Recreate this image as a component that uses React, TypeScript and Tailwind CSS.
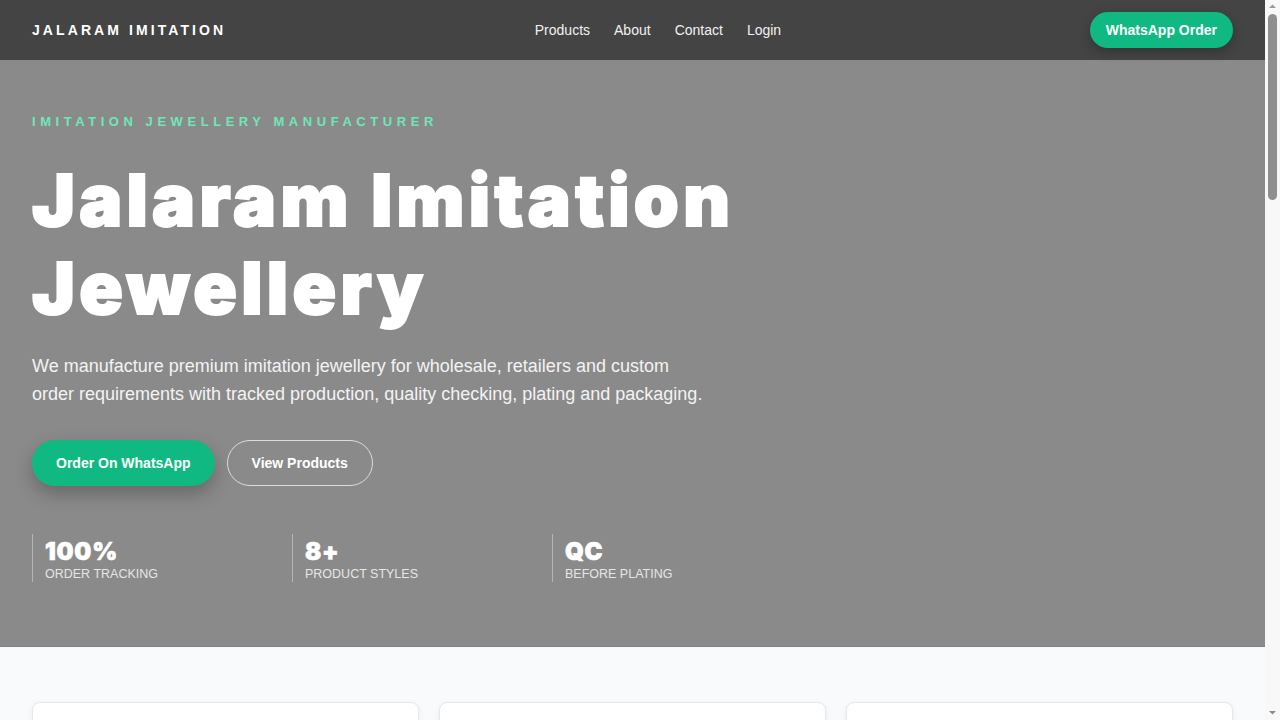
import React from "react";

const heavy = "font-['Inter','Liberation_Sans',sans-serif]";

const stats = [
  { value: "100%", label: "Order Tracking" },
  { value: "8+", label: "Product Styles" },
  { value: "QC", label: "Before Plating" },
];

const features = [
  {
    title: "Wholesale Supply",
    text: "Bulk orders of necklaces, earrings, bangles and sets for distributors and shops across India.",
  },
  {
    title: "Custom Orders",
    text: "Share your design or reference and we prepare samples, moulds and finished pieces to your brief.",
  },
  {
    title: "Tracked Production",
    text: "Every order moves through casting, polishing, plating, quality checking and packaging stages.",
  },
];

const products = [
  "Necklace Sets",
  "Earrings",
  "Bangles",
  "Mangalsutra",
  "Rings",
  "Maang Tikka",
  "Anklets",
  "Bridal Sets",
];

// Classic page scrollbar drawn beside the scrolling content
function Scrollbar() {
  return (
    <div className="flex w-[15px] shrink-0 flex-col items-center bg-[#f8f8f8]">
      <svg width="15" height="14" viewBox="0 0 15 14" className="shrink-0">
        <path d="M4 8 L7.5 4.5 L11 8 Z" fill="#9a9a9a" />
      </svg>
      <div className="h-[186px] w-[9px] shrink-0 rounded-full bg-[#8f8f8f]" />
      <div className="flex-1" />
      <svg width="15" height="14" viewBox="0 0 15 14" className="shrink-0">
        <path d="M4 5 L7.5 8.5 L11 5 Z" fill="#8a8a8a" />
      </svg>
    </div>
  );
}

export default function App() {
  return (
    <div className="flex h-screen bg-[#f8fafc] font-['Liberation_Sans',Arial,sans-serif] text-[#1f2937]">
      <div className="min-w-0 flex-1 overflow-y-auto [scrollbar-width:none]">
        {/* top navigation */}
        <header className="flex h-[60px] items-center justify-between bg-[#444444] px-8">
          <div className="text-[14px] font-bold tracking-[0.22em] text-white">JALARAM IMITATION</div>
          <nav className="flex items-center gap-6 text-[14px] text-[#f1f1f1]">
            <a href="#products">Products</a>
            <a href="#about">About</a>
            <a href="#contact">Contact</a>
            <a href="#login">Login</a>
          </nav>
          <a
            href="#whatsapp"
            className="flex h-9 items-center rounded-full bg-[#10b981] px-4 text-[14px] font-bold text-white shadow-[0_4px_12px_rgba(0,0,0,0.25)]"
          >
            WhatsApp Order
          </a>
        </header>

        {/* hero */}
        <section className="border-b border-[#7f7f7f] bg-[#8a8a8a] px-8 pb-16 pt-[52px]">
          <p className="text-[13px] font-bold leading-5 tracking-[0.35em] text-[#6ee7b7]">
            IMITATION JEWELLERY MANUFACTURER
          </p>
          <h1
            className={`mt-6 text-[72px] font-black leading-[88px] tracking-[0.06em] text-white [-webkit-text-stroke:2px_white] ${heavy}`}
          >
            Jalaram Imitation
            <br />
            Jewellery
          </h1>
          <p className="mt-5 max-w-[680px] text-[18px] leading-7 text-[#f3f3f3]">
            We manufacture premium imitation jewellery for wholesale, retailers and custom order requirements with
            tracked production, quality checking, plating and packaging.
          </p>
          <div className="mt-8 flex items-center gap-3">
            <a
              href="#whatsapp"
              className="flex h-[46px] items-center rounded-full bg-[#10b981] px-6 text-[14px] font-bold text-white shadow-[0_8px_18px_rgba(0,0,0,0.25)]"
            >
              Order On WhatsApp
            </a>
            <a
              href="#products"
              className="flex h-[46px] items-center rounded-full border border-[#dcdcdc] px-6 text-[14px] font-bold text-white"
            >
              View Products
            </a>
          </div>
          <div className="mt-12 flex">
            {stats.map((s) => (
              <div key={s.label} className="w-[260px] border-l border-[#b5b5b5] pl-3">
                <div
                  className={`pt-[3px] text-[24px] font-black leading-[29px] tracking-[0.03em] text-white [-webkit-text-stroke:0.6px_white] ${heavy}`}
                >
                  {s.value}
                </div>
                <div className="text-[12.5px] uppercase leading-[16px] text-[#e6e6e6]">{s.label}</div>
              </div>
            ))}
          </div>
        </section>

        {/* services */}
        <section id="about" className="px-8 pt-[55px]">
          <div className="grid grid-cols-3 gap-5">
            {features.map((f) => (
              <div
                key={f.title}
                className="rounded-lg border border-[#e5e7eb] bg-white p-7 shadow-[0_2px_6px_rgba(15,23,42,0.06)]"
              >
                <div className="mt-6 h-12 w-12 rounded-full bg-[#d1fae5]" />
                <h3 className="mt-5 text-[20px] font-bold text-[#111827]">{f.title}</h3>
                <p className="mt-3 text-[15px] leading-6 text-[#4b5563]">{f.text}</p>
              </div>
            ))}
          </div>
        </section>

        {/* products */}
        <section id="products" className="px-8 pt-24">
          <p className="text-[13px] font-bold tracking-[0.35em] text-[#059669]">OUR COLLECTION</p>
          <h2 className="mt-3 text-[40px] font-bold text-[#111827]">Product Styles</h2>
          <div className="mt-10 grid grid-cols-4 gap-5">
            {products.map((p) => (
              <div key={p} className="overflow-hidden rounded-lg border border-[#e5e7eb] bg-white">
                <div className="h-[220px] bg-[#e5e7eb]" />
                <div className="p-5">
                  <div className="text-[17px] font-bold text-[#111827]">{p}</div>
                  <div className="mt-1 text-[14px] text-[#6b7280]">Wholesale &amp; custom orders</div>
                </div>
              </div>
            ))}
          </div>
        </section>

        {/* contact */}
        <section id="contact" className="px-8 py-24">
          <div className="flex items-center justify-between rounded-2xl bg-[#444444] p-12">
            <div>
              <h2 className="text-[32px] font-bold text-white">Ready to place an order?</h2>
              <p className="mt-2 text-[16px] text-[#e5e5e5]">
                Send us your requirement on WhatsApp and get a quick quote.
              </p>
            </div>
            <a
              href="#whatsapp"
              className="flex h-[46px] items-center rounded-full bg-[#10b981] px-6 text-[14px] font-bold text-white"
            >
              Order On WhatsApp
            </a>
          </div>
        </section>

        <footer className="bg-[#333333] px-8 py-10 text-[14px] text-[#d1d5db]">
          © Jalaram Imitation Jewellery. All rights reserved.
        </footer>
      </div>
      <Scrollbar />
    </div>
  );
}
